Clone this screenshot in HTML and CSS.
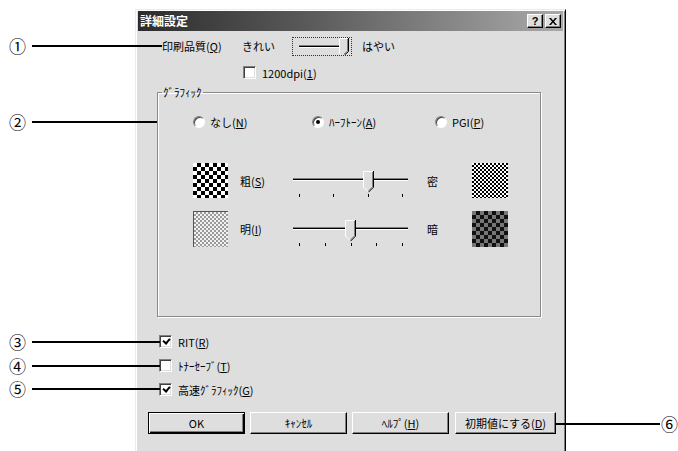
FILE: index.html
```html
<!DOCTYPE html>
<html lang="ja">
<head>
    <meta charset="UTF-8">
    <title>詳細設定</title>
    <link rel="stylesheet" href="styles.css">
</head>
<body>
<div class="page">
    <div class="dialog">
        <div class="titlebar">
            <span class="title">詳細設定</span>
            <span class="tb-btns">
                <span class="tb-btn">?</span>
                <span class="tb-btn">
                    <svg width="8" height="7" viewBox="0 0 8 7"><path d="M0 0h2l2 2.5L6 0h2L5 3.5 8 7H6L4 4.5 2 7H0l3-3.5z" fill="#000"/></svg>
                </span>
            </span>
        </div>

        <div class="content">
            <div class="quality-row">
                <span class="q-label">印刷品質(<u>Q</u>)</span>
                <span class="q-end">きれい</span>
                <div class="q-slider">
                    <svg width="58" height="17" viewBox="0 0 58 17">
                        <rect x="6" y="7" width="42" height="1" fill="#808080"/>
                        <rect x="6" y="8" width="42" height="1" fill="#000"/>
                        <rect x="6" y="9" width="42" height="1" fill="#fff"/>
                        <g transform="translate(46,0)">
                            <polygon points="0,0 9,0 9,13 5,16 0,16" fill="#dedede"/>
                            <path d="M0.5 16 V0.5 H8.5" stroke="#fff" fill="none"/>
                            <path d="M8.5 1 V13 L5 16" stroke="#808080" fill="none"/>
                            <path d="M9.5 0 V13.5 L5.5 17" stroke="#000" fill="none"/>
                        </g>
                    </svg>
                </div>
                <span>はやい</span>
            </div>

            <div class="dpi-row">
                <span class="check"></span>
                <span>1200dpi(<u>1</u>)</span>
            </div>

            <fieldset class="group">
                <legend>ｸﾞﾗﾌｨｯｸ</legend>
                <div class="radio-row">
                    <label class="radio-item r1"><span class="radio"></span><span>なし(<u>N</u>)</span></label>
                    <label class="radio-item r2"><span class="radio on"></span><span>ﾊｰﾌﾄｰﾝ(<u>A</u>)</span></label>
                    <label class="radio-item"><span class="radio"></span><span>PGI(<u>P</u>)</span></label>
                </div>

                <div class="pattern-grid">
                    <div class="pat pat-coarse"></div>
                    <span class="p-label">粗(<u>S</u>)</span>
                    <svg class="slider" width="115" height="35" viewBox="0 0 115 35">
                        <rect x="0" y="15" width="115" height="1" fill="#808080"/>
                        <rect x="0" y="16" width="115" height="1" fill="#000"/>
                        <rect x="0" y="17" width="115" height="1" fill="#fff"/>
                        <g transform="translate(70,8)">
                            <polygon points="0,0 10,0 10,16 5,21 0,16" fill="#dedede"/>
                            <path d="M0.5 16 V0.5 H9.5" stroke="#fff" fill="none"/>
                            <path d="M0.5 16 L5 20.5" stroke="#fff" fill="none"/>
                            <path d="M9.5 1 V15.8 L5.5 19.8" stroke="#808080" fill="none"/>
                            <path d="M10.5 0 V16.2 L5.5 21.2" stroke="#000" fill="none"/>
                        </g>
                        <rect x="6" y="31" width="1" height="3" fill="#000"/>
                        <rect x="40" y="31" width="1" height="3" fill="#000"/>
                        <rect x="75" y="31" width="1" height="3" fill="#000"/>
                        <rect x="109" y="31" width="1" height="3" fill="#000"/>
                    </svg>
                    <span class="p-label right">密</span>
                    <div class="pat pat-fine"></div>

                    <div class="pat pat-light"></div>
                    <span class="p-label">明(<u>I</u>)</span>
                    <svg class="slider" width="115" height="36" viewBox="0 0 115 36">
                        <rect x="0" y="16" width="115" height="1" fill="#808080"/>
                        <rect x="0" y="17" width="115" height="1" fill="#000"/>
                        <rect x="0" y="18" width="115" height="1" fill="#fff"/>
                        <g transform="translate(52,9)">
                            <polygon points="0,0 10,0 10,16 5,21 0,16" fill="#dedede"/>
                            <path d="M0.5 16 V0.5 H9.5" stroke="#fff" fill="none"/>
                            <path d="M0.5 16 L5 20.5" stroke="#fff" fill="none"/>
                            <path d="M9.5 1 V15.8 L5.5 19.8" stroke="#808080" fill="none"/>
                            <path d="M10.5 0 V16.2 L5.5 21.2" stroke="#000" fill="none"/>
                        </g>
                        <rect x="6" y="32" width="1" height="3" fill="#000"/>
                        <rect x="32" y="32" width="1" height="3" fill="#000"/>
                        <rect x="58" y="32" width="1" height="3" fill="#000"/>
                        <rect x="83" y="32" width="1" height="3" fill="#000"/>
                        <rect x="109" y="32" width="1" height="3" fill="#000"/>
                    </svg>
                    <span class="p-label right">暗</span>
                    <div class="pat pat-dark"></div>
                </div>
            </fieldset>

            <div class="options">
                <div class="opt"><span class="check on"></span><span>RIT(<u>R</u>)</span></div>
                <div class="opt"><span class="check"></span><span>ﾄﾅｰｾｰﾌﾞ(<u>T</u>)</span></div>
                <div class="opt"><span class="check on"></span><span>高速ｸﾞﾗﾌｨｯｸ(<u>G</u>)</span></div>
            </div>

            <div class="buttons">
                <button class="btn default">OK</button>
                <button class="btn">ｷｬﾝｾﾙ</button>
                <button class="btn">ﾍﾙﾌﾟ(<u>H</u>)</button>
                <button class="btn wide">初期値にする(<u>D</u>)</button>
            </div>
        </div>
    </div>

    <!-- callouts -->
    <span class="num n1">①</span><span class="lead l1"></span>
    <span class="num n2">②</span><span class="lead l2"></span>
    <span class="num n3">③</span><span class="lead l3"></span>
    <span class="num n4">④</span><span class="lead l4"></span>
    <span class="num n5">⑤</span><span class="lead l5"></span>
    <span class="lead l6"></span><span class="num n6">⑥</span>
</div>
</body>
</html>
```

FILE: styles.css
```css
body {
    margin: 0;
    background: #fff;
    font-family: "Noto Sans CJK JP", "Noto Sans", sans-serif;
    font-size: 11px;
    color: #000;
}
u {
    text-decoration: underline;
    text-underline-offset: 1px;
}
.page {
    position: relative;
    width: 678px;
    height: 451px;
    overflow: hidden;
    padding: 9px 0 0 135px;
    box-sizing: border-box;
}
.dialog {
    width: 431px;
    height: 450px;
    box-sizing: border-box;
    background: #dedede;
    border-top: 1px solid #ececec;
    border-left: 1px solid #ececec;
    border-right: 1px solid #000;
    box-shadow: inset 1px 1px #fff, inset -1px 0 #808080;
    padding: 1px 2px 0 2px;
}
.titlebar {
    height: 20px;
    background: linear-gradient(90deg, #2c2c2c, #5a5a5a 40%, #a9a9a9);
    display: flex;
    align-items: center;
    justify-content: space-between;
    padding: 0 2px 0 2px;
}
.title {
    color: #fff;
    font-weight: bold;
    font-size: 12px;
    line-height: 1;
}
.tb-btns {
    display: flex;
    gap: 2px;
}
.tb-btn {
    width: 16px;
    height: 14px;
    box-sizing: border-box;
    background: #dedede;
    border: 1px solid;
    border-color: #fff #000 #000 #fff;
    box-shadow: inset -1px -1px #808080;
    display: flex;
    align-items: center;
    justify-content: center;
    font-family: "Liberation Sans", sans-serif;
    font-weight: bold;
    font-size: 11px;
    line-height: 1;
}
.content {
    padding: 5px 0 0 19px;
}
.quality-row {
    display: flex;
    align-items: center;
    height: 20px;
    padding-left: 5px;
}
.q-label {
    width: 80px;
}
.q-end {
    width: 50px;
}
.q-slider {
    width: 60px;
    height: 19px;
    box-sizing: border-box;
    border: 1px dotted #333;
    margin-right: 10px;
    display: flex;
    align-items: center;
}
.dpi-row {
    display: flex;
    align-items: center;
    gap: 6px;
    margin-top: 10px;
    padding-left: 86px;
    height: 13px;
}
.check {
    position: relative;
    width: 13px;
    height: 13px;
    box-sizing: border-box;
    background: #fff;
    border: 1px solid;
    border-color: #808080 #fff #fff #808080;
    box-shadow: inset 1px 1px #404040, inset -1px -1px #dedede;
    flex: none;
}
.check.on::after {
    content: "";
    position: absolute;
    left: 3px;
    top: 2px;
    width: 5px;
    height: 3px;
    border-left: 2px solid #000;
    border-bottom: 2px solid #000;
    transform: rotate(-50deg);
}
.group {
    margin: 6px 0 0 0;
    padding: 0;
    width: 384px;
    height: 232px;
    box-sizing: border-box;
    border: 1px solid #8a8a8a;
    box-shadow: 1px 1px #fff, inset 1px 1px #fff;
    min-width: 0;
}
.group legend {
    margin-left: 4px;
    padding: 0 1px;
    font-size: 11px;
    line-height: 14px;
}
.radio-row {
    display: flex;
    align-items: center;
    height: 14px;
    margin-top: 16px;
    padding-left: 35px;
}
.radio-item {
    display: flex;
    align-items: center;
    gap: 5px;
}
.r1 {
    width: 119px;
}
.r2 {
    width: 123px;
}
.radio {
    position: relative;
    width: 12px;
    height: 12px;
    box-sizing: border-box;
    border-radius: 50%;
    background: #fff;
    border: 1px solid;
    border-color: #808080 #fff #fff #808080;
    box-shadow: inset 1px 1px #404040;
}
.radio.on::after {
    content: "";
    position: absolute;
    left: 3px;
    top: 3px;
    width: 4px;
    height: 4px;
    border-radius: 50%;
    background: #000;
}
.pattern-grid {
    display: grid;
    grid-template-columns: 35px 65px 115px 64px 36px;
    grid-template-rows: 35px 36px;
    row-gap: 13px;
    align-items: center;
    margin: 34px 0 0 35px;
}
.p-label {
    padding-left: 12px;
}
.p-label.right {
    padding-left: 19px;
}
.slider {
    display: block;
}
.pat {
    width: 35px;
    height: 35px;
}
.pat-coarse {
    background: repeating-conic-gradient(#000 0 25%, #fff 0 50%) 0 0 / 8px 8px;
}
.pat-fine {
    width: 36px;
    background: repeating-conic-gradient(#000 0 25%, #fff 0 50%) 0 0 / 4px 4px;
}
.pat-light {
    height: 36px;
    background: repeating-conic-gradient(#9a9a9a 0 25%, #f2f2f2 0 50%) 0 0 / 4px 4px;
    border-top: 1px solid #555;
    border-left: 1px solid #555;
    box-sizing: border-box;
}
.pat-dark {
    width: 36px;
    height: 36px;
    background: repeating-conic-gradient(#111 0 25%, #777 0 50%) 0 0 / 8px 8px;
}
.options {
    display: flex;
    flex-direction: column;
    gap: 11px;
    margin-top: 18px;
    padding-left: 2px;
}
.opt {
    display: flex;
    align-items: center;
    gap: 6px;
    height: 13px;
}
.buttons {
    display: flex;
    gap: 5px;
    margin: 16px 0 0 -9px;
}
.btn {
    width: 97px;
    height: 22px;
    box-sizing: border-box;
    background: #dedede;
    font-family: inherit;
    font-size: 11px;
    padding: 0;
    color: #000;
    border: 1px solid;
    border-color: #fff #000 #000 #fff;
    box-shadow: inset -1px -1px #808080;
}
.btn.default {
    border: 1px solid #000;
    box-shadow: inset 1px 1px #fff, inset -1px -1px #000, inset -2px -2px #808080;
}
.btn.wide {
    width: 101px;
    margin-left: 1px;
}
.num {
    position: absolute;
    left: 9px;
    font-size: 17px;
    line-height: 18px;
}
.lead {
    position: absolute;
    left: 32px;
    height: 2px;
    background: #000;
}
.n1 { top: 37px; }
.l1 { top: 45px; width: 130px; }
.n2 { top: 113px; }
.l2 { top: 121px; width: 125px; }
.n3 { top: 333px; }
.l3 { top: 341px; width: 128px; }
.n4 { top: 357px; }
.l4 { top: 365px; width: 128px; }
.n5 { top: 380px; }
.l5 { top: 388px; width: 128px; }
.n6 { top: 415px; left: 661px; }
.l6 { top: 423px; left: 556px; width: 104px; }
```
